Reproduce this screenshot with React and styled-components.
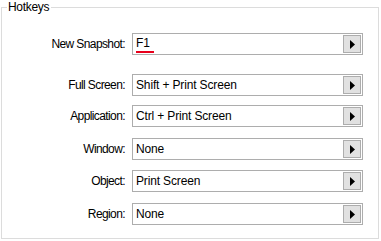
import React from 'react'
import styled, { createGlobalStyle } from 'styled-components'

const Global = createGlobalStyle`
  html, body {
    margin: 0;
    padding: 0;
    background: #fff;
  }
  body {
    font-family: "Liberation Sans", Arial, sans-serif;
    font-size: 12px;
    color: #000;
  }
`

const Group = styled.fieldset`
  box-sizing: border-box;
  width: 378px;
  height: 239px;
  margin: 0 0 0 1px;
  padding: 19px 0 0 0;
  border: 1px solid #dcdcdc;
  min-inline-size: 0;
`

const Legend = styled.legend`
  margin-left: 5px;
  padding: 0 2px 0 1px;
  line-height: 14px;
  height: 14px;
  letter-spacing: -0.3px;
`

const Rows = styled.div`
  display: flex;
  flex-direction: column;
`

const Row = styled.div`
  display: flex;
  align-items: center;
  margin-top: ${p => p.$space || 0}px;
`

const Label = styled.label`
  width: 123px;
  margin-right: 7px;
  text-align: right;
  white-space: nowrap;
  letter-spacing: -0.6px;
`

const Field = styled.div`
  box-sizing: border-box;
  width: 231px;
  height: 22px;
  border: 1px solid #adadad;
  display: flex;
  align-items: center;
  padding: 0 1px 0 3px;
`

const Value = styled.span`
  flex: 1;
  white-space: nowrap;
  line-height: 16px;
  letter-spacing: -0.15px;
`

const Key = styled.span`
  display: inline-block;
  border-bottom: ${p => (p.$marked ? '2px solid #e8001c' : 'none')};
  padding: ${p => (p.$marked ? '0 4px 1px 0' : '0')};
  line-height: 14px;
`

const Arrow = styled.button`
  box-sizing: border-box;
  width: 18px;
  height: 18px;
  padding: 0;
  margin: 0;
  background: #e1e1e1;
  border: 1px solid #adadad;
  display: flex;
  align-items: center;
  justify-content: center;
`

const rows = [
  { label: 'New Snapshot:', value: 'F1', space: 0, marked: true },
  { label: 'Full Screen:', value: 'Shift + Print Screen', space: 19 },
  { label: 'Application:', value: 'Ctrl + Print Screen', space: 9 },
  { label: 'Window:', value: 'None', space: 11 },
  { label: 'Object:', value: 'Print Screen', space: 10 },
  { label: 'Region:', value: 'None', space: 11 },
]

function App() {
  return (
    <>
      <Global />
      <Group>
        <Legend>Hotkeys</Legend>
        <Rows>
          {rows.map(r => (
            <Row key={r.label} $space={r.space}>
              <Label>{r.label}</Label>
              <Field>
                <Value>
                  <Key $marked={r.marked}>{r.value}</Key>
                </Value>
                <Arrow>
                  <svg width="5" height="9" viewBox="0 0 5 9">
                    <path d="M0 0 L5 4.5 L0 9 Z" fill="#000" />
                  </svg>
                </Arrow>
              </Field>
            </Row>
          ))}
        </Rows>
      </Group>
    </>
  )
}

export default App
